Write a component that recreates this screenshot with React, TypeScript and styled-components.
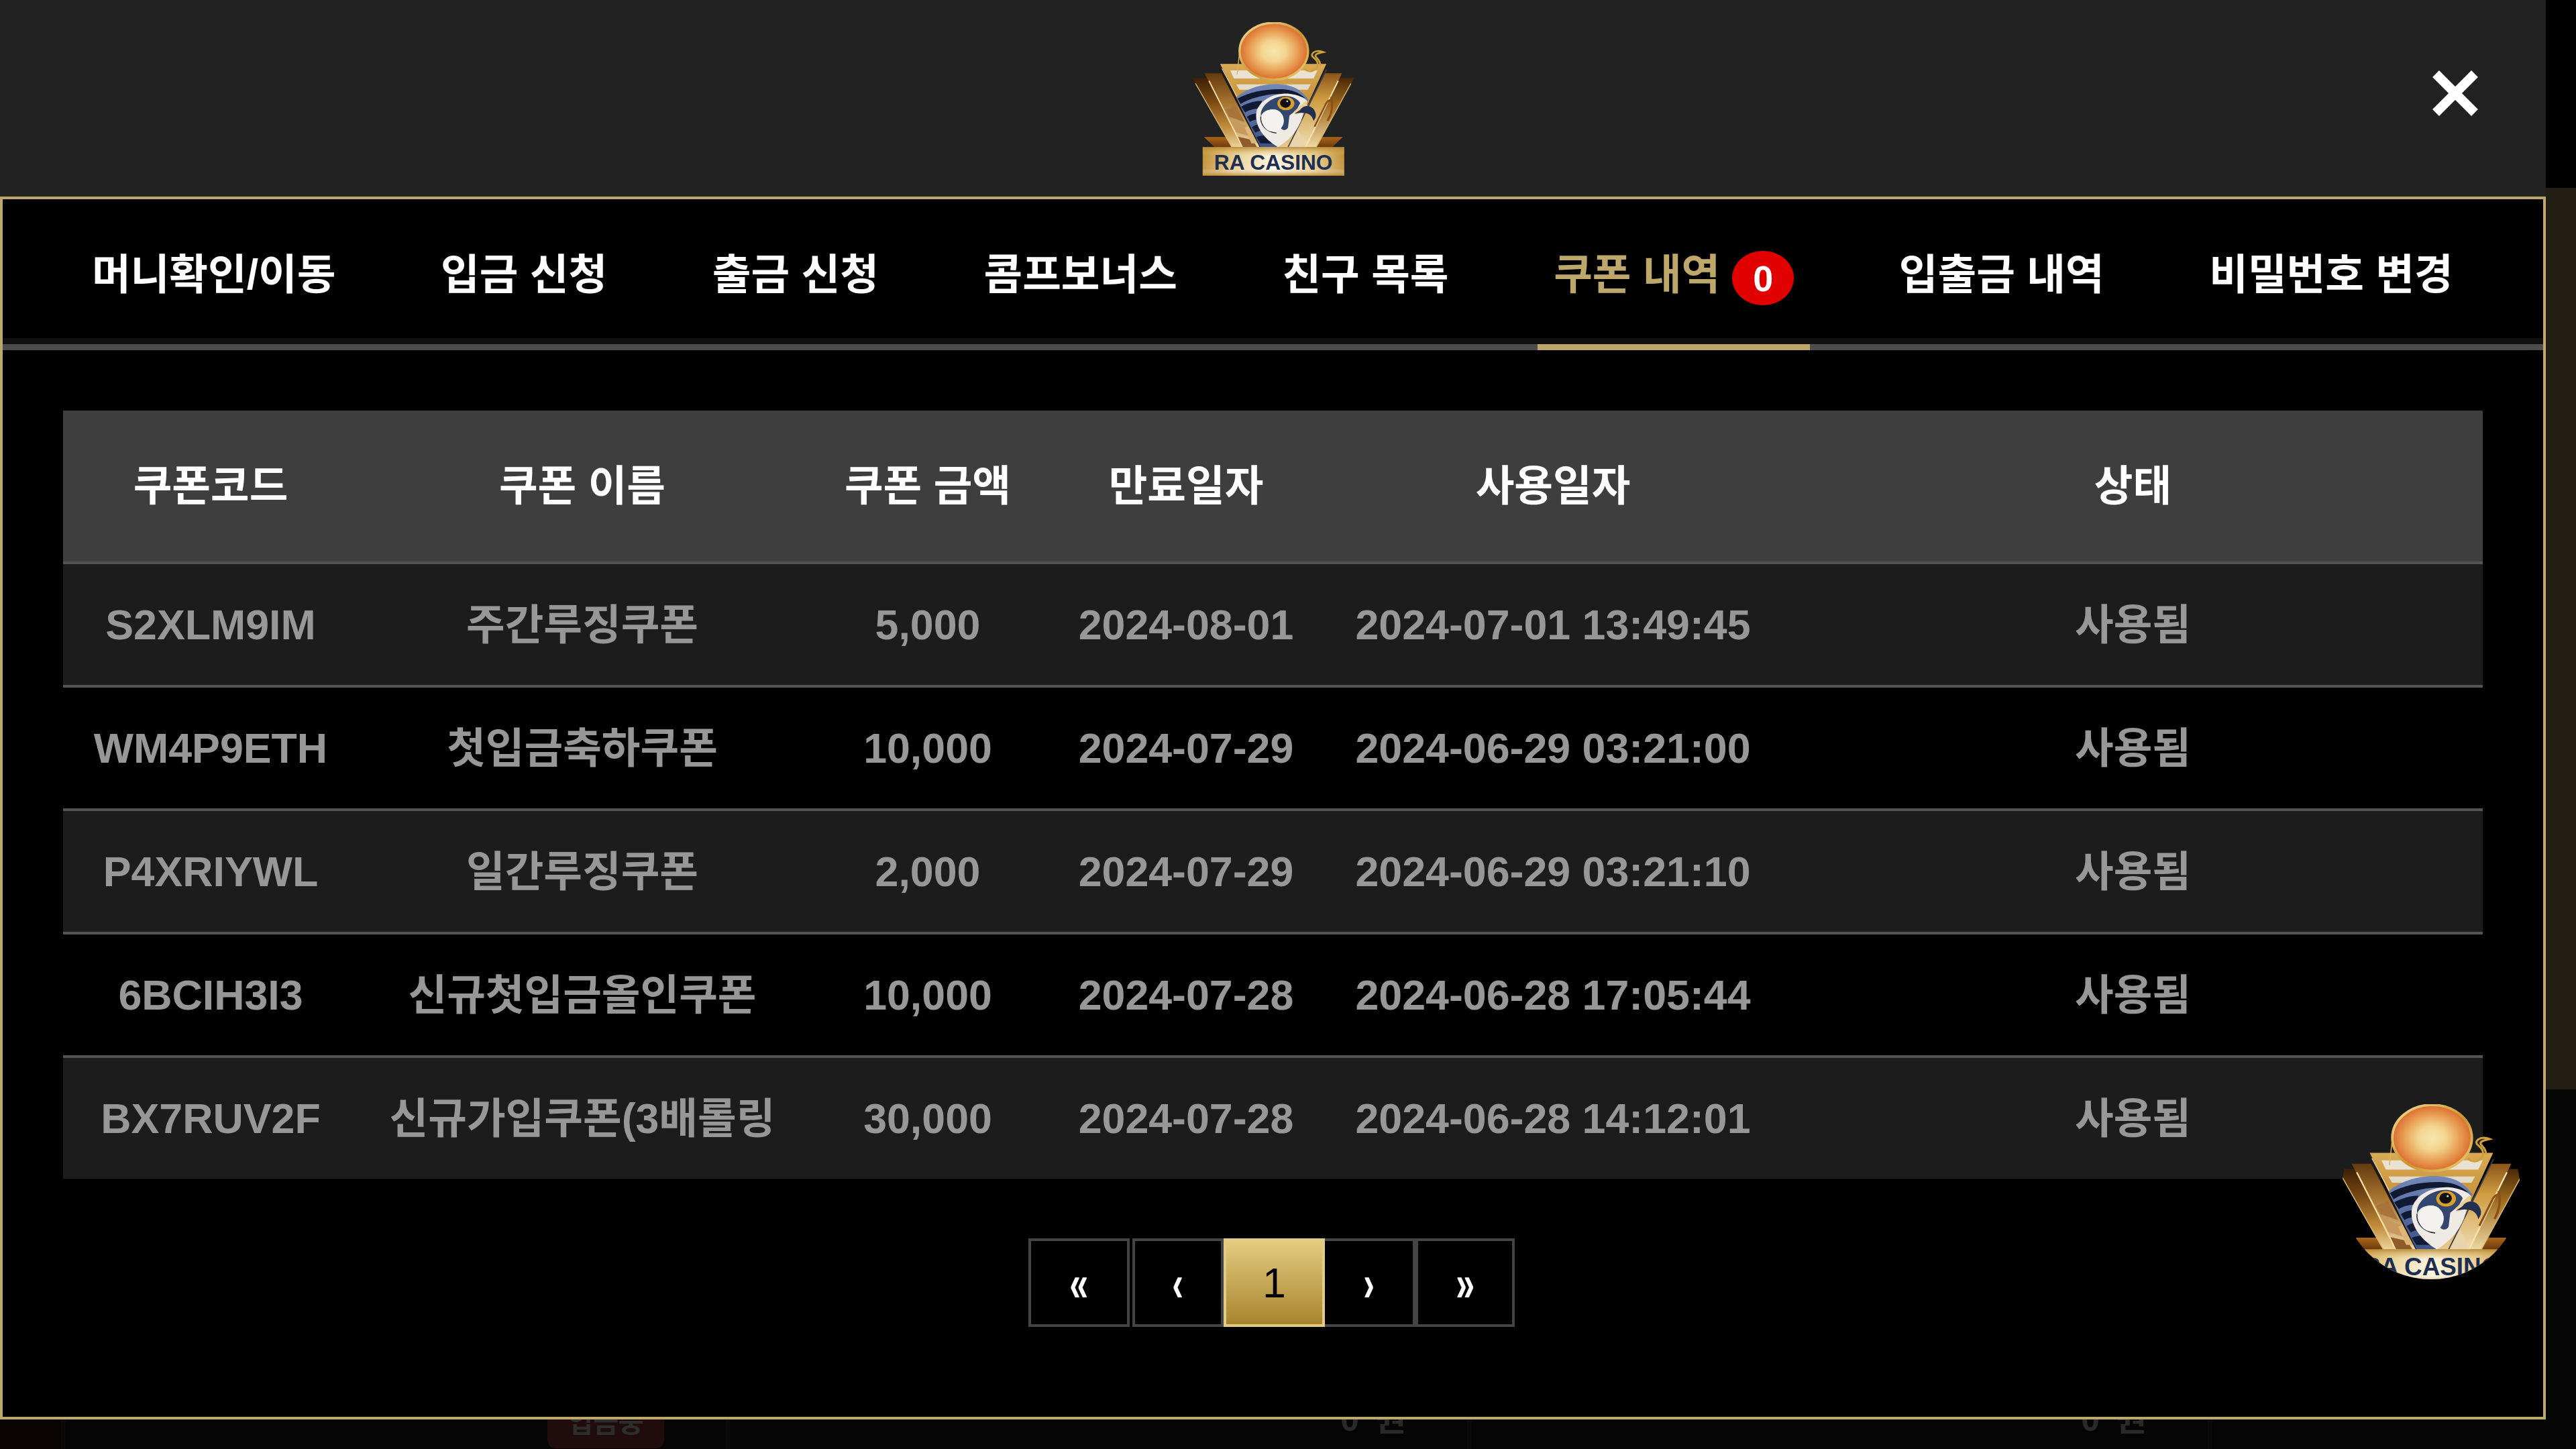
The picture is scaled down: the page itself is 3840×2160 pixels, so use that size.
import React from "react";
import styled, { createGlobalStyle } from "styled-components";

const GOLD = "#bda76b";
const FONT = `"Liberation Sans", "Noto Sans CJK KR", sans-serif`;

const Global = createGlobalStyle`
  html, body { margin: 0; padding: 0; width: 3840px; height: 2160px; overflow: hidden; background: #000; }
  #root { width: 3840px; height: 2160px; }
  * { box-sizing: border-box; }
`;

const Page = styled.div`
  display: grid;
  grid-template-columns: 3795px 45px;
  width: 3840px;
  height: 2160px;
  position: relative;
`;
const Main = styled.div`
  display: flex;
  flex-direction: column;
  min-width: 0;
`;
const Rail = styled.div`
  display: flex;
  flex-direction: column;
  background: #050505;
`;
const RailTop = styled.div`
  height: 280px;
  background: #000;
`;
const RailThumb = styled.div`
  height: 1344px;
  background: #231f14;
`;

const Header = styled.header`
  height: 293px;
  background: #222;
  display: grid;
  grid-template-columns: 1fr auto 1fr;
`;
const HeaderLogo = styled.div`
  grid-column: 2;
  width: 242px;
  height: 229px;
  margin-top: 33px;
`;
const CloseButton = styled.button`
  grid-column: 3;
  justify-self: end;
  align-self: start;
  width: 68px;
  height: 68px;
  margin: 105px 101px 0 0;
  padding: 0;
  border: 0;
  background: none;
  display: block;
`;

const Frame = styled.section`
  height: 1823px;
  border: 4px solid ${GOLD};
  background: #000;
  display: flex;
  flex-direction: column;
`;
const TabBar = styled.nav`
  height: 225px;
  display: flex;
  gap: 108.6px;
  padding-left: 109px;
  border-bottom: 9px solid #4d4d4d;
  box-shadow: inset 0 -9px 0 #111;
  flex: none;
`;
const Tab = styled.div<{ $active?: boolean }>`
  position: relative;
  display: flex;
  align-items: center;
  gap: 18px;
  height: 216px;
  padding: 8px 24px 0;
  font: 700 62.7px/1 ${FONT};
  white-space: nowrap;
  color: ${(p) => (p.$active ? GOLD : "#fff")};
  ${(p) =>
    p.$active &&
    `&::after { content: ""; position: absolute; left: 0; right: 0; bottom: -9px; height: 9px; background: ${GOLD}; }`}
`;
const Badge = styled.span`
  width: 92px;
  height: 81px;
  margin-top: 11px;
  border-radius: 50%;
  background: #e00000;
  color: #fff;
  display: flex;
  align-items: center;
  justify-content: center;
  font: 700 54px/1 ${FONT};
`;

const Content = styled.div`
  padding: 90px 0 0 90px;
`;
const Table = styled.table`
  width: 3607px;
  table-layout: fixed;
  border-collapse: separate;
  border-spacing: 0;
`;
const Th = styled.th`
  height: 229px;
  padding: 0;
  background: #3e3e3e;
  border-bottom: 4px solid #555;
  color: #fff;
  font: 700 62.7px/1 ${FONT};
  text-align: center;
`;
const Td = styled.td<{ $odd: boolean; $last: boolean }>`
  height: ${(p) => (p.$last ? 180 : 184)}px;
  padding: 0;
  background: ${(p) => (p.$odd ? "#1c1c1c" : "#000")};
  border-bottom: ${(p) => (p.$last ? "0" : "4px solid #555")};
  color: #979797;
  font: 700 62.7px/1 ${FONT};
  text-align: center;
  white-space: nowrap;
  overflow: hidden;
`;

const Pager = styled.div`
  display: flex;
  justify-content: center;
  margin-top: 89px;
  padding-right: 94px;
`;
const PageBtn = styled.div<{ $w: number; $gap?: number; $active?: boolean; $noLeft?: boolean }>`
  width: ${(p) => p.$w}px;
  height: 132px;
  margin-right: ${(p) => p.$gap ?? 0}px;
  border: 4px solid ${(p) => (p.$active ? "#e2cc84" : "#444")};
  ${(p) => (p.$noLeft ? "border-left-width: 0;" : "")}
  background: ${(p) => (p.$active ? "linear-gradient(180deg, #e2cc80 0%, #a8842f 100%)" : "#000")};
  color: ${(p) => (p.$active ? "#000" : "#fff")};
  display: flex;
  align-items: center;
  justify-content: center;
  font: 400 62.7px/1 ${FONT};
`;
const Chevron = styled.span`
  display: block;
  margin-top: 2px;
  font-size: 76px;
  font-weight: 700;
  line-height: 1;
  transform: scaleX(0.66);
`;

const Strip = styled.div`
  flex: 1;
  min-height: 0;
  overflow: hidden;
  background: #050505;
  display: grid;
  grid-template-columns: 50px 1038px 1106px 1104px 1fr;
  grid-template-rows: 44px;
`;
const StripCell = styled.div<{ $tint?: boolean; $noLine?: boolean }>`
  display: flex;
  justify-content: flex-end;
  align-items: flex-end;
  padding-right: 91px;
  background: ${(p) => (p.$tint ? "#090403" : "transparent")};
  border-right: ${(p) => (p.$noLine ? "0" : "7px solid #0a0a0a")};
  overflow: hidden;
  min-width: 0;
`;
const GhostStatus = styled.div`
  flex: none;
  width: 174px;
  height: 90px;
  margin-bottom: 1px;
  border-radius: 12px;
  background: #200c0c;
  color: #2d2d2d;
  font: 700 41px/1 ${FONT};
  display: flex;
  align-items: flex-end;
  justify-content: center;
  padding-bottom: 17px;
`;
const GhostAmount = styled.div`
  flex: none;
  color: #2a2a2a;
  font: 700 50px/1 ${FONT};
  word-spacing: 10px;
  margin-bottom: 19px;
  white-space: pre;
`;

const FloatLogo = styled.div`
  position: absolute;
  left: 3491px;
  top: 1641px;
  width: 266px;
  height: 266px;
  border-radius: 50%;
  overflow: hidden;
`;
const FloatLogoInner = styled.div`
  width: 281px;
  height: 266px;
  margin: 5px 0 0 -7px;
`;

const LogoSvg = styled.svg`
  display: block;
  width: 100%;
  height: 100%;
`;

const Logo = () => (
  <LogoSvg viewBox="235 98 725 687" aria-label="RA CASINO logo">
    <defs>
      <radialGradient id="sun" cx="50%" cy="50%" r="52%">
        <stop offset="0%" stopColor="#f6e6ad" />
        <stop offset="35%" stopColor="#f3d48f" />
        <stop offset="70%" stopColor="#e79a50" />
        <stop offset="100%" stopColor="#d8652c" />
      </radialGradient>
      <linearGradient id="ring" x1="0" y1="0" x2="1" y2="1">
        <stop offset="0%" stopColor="#f3dd96" />
        <stop offset="55%" stopColor="#c7962f" />
        <stop offset="100%" stopColor="#f0cf73" />
      </linearGradient>
      <linearGradient id="tri" x1="0" y1="0" x2="0" y2="1">
        <stop offset="0%" stopColor="#d9aa55" />
        <stop offset="45%" stopColor="#c8933a" />
        <stop offset="100%" stopColor="#e6c98a" />
      </linearGradient>
      <linearGradient id="wingOuter" x1="0" y1="0" x2="0" y2="1">
        <stop offset="0%" stopColor="#3e2005" />
        <stop offset="35%" stopColor="#7a4a14" />
        <stop offset="70%" stopColor="#c08a3a" />
        <stop offset="100%" stopColor="#ecd39a" />
      </linearGradient>
      <linearGradient id="wingInner" x1="0" y1="0" x2="0" y2="1">
        <stop offset="0%" stopColor="#643a0e" />
        <stop offset="40%" stopColor="#a87430" />
        <stop offset="100%" stopColor="#ecd6a4" />
      </linearGradient>
      <linearGradient id="wingRightOuter" x1="0" y1="0" x2="0" y2="1">
        <stop offset="0%" stopColor="#4a2807" />
        <stop offset="40%" stopColor="#a06c20" />
        <stop offset="100%" stopColor="#eed8a4" />
      </linearGradient>
      <linearGradient id="wingRight" x1="0" y1="0" x2="0" y2="1">
        <stop offset="0%" stopColor="#8a5518" />
        <stop offset="35%" stopColor="#cf9c40" />
        <stop offset="100%" stopColor="#f0ddb2" />
      </linearGradient>
      <linearGradient id="low" x1="0" y1="0" x2="0" y2="1">
        <stop offset="0%" stopColor="#a86518" />
        <stop offset="100%" stopColor="#6e3a0c" />
      </linearGradient>
      <linearGradient id="band" x1="0" y1="0" x2="1" y2="0">
        <stop offset="0%" stopColor="#bf8c30" />
        <stop offset="22%" stopColor="#e9cf92" />
        <stop offset="50%" stopColor="#fdf8e6" />
        <stop offset="78%" stopColor="#e9cf92" />
        <stop offset="100%" stopColor="#bf8c30" />
      </linearGradient>
      <linearGradient id="bandEdge" x1="0" y1="0" x2="0" y2="1">
        <stop offset="0%" stopColor="#b5832a" stopOpacity="0.85" />
        <stop offset="30%" stopColor="#e4c67e" stopOpacity="0.1" />
        <stop offset="75%" stopColor="#fff" stopOpacity="0.1" />
        <stop offset="100%" stopColor="#b5832a" stopOpacity="0.85" />
      </linearGradient>
      <linearGradient id="helm" x1="0" y1="0" x2="0" y2="1">
        <stop offset="0%" stopColor="#7488b8" />
        <stop offset="100%" stopColor="#3d5384" />
      </linearGradient>
    </defs>

    {/* lower trapezoids */}
    <polygon points="288,612 402,612 420,657 335,657" fill="url(#low)" />
    <polygon points="908,612 800,612 782,657 862,657" fill="url(#low)" />

    {/* left wing */}
    <polygon points="235,347 310,347 470,657 412,657" fill="url(#wingOuter)" />
    <polyline points="250,372 412,657" fill="none" stroke="#d8b56e" strokeWidth="4" />
    <polygon points="290,327 368,327 545,657 460,657" fill="url(#wingInner)" />
    <polyline points="310,360 460,657" fill="none" stroke="#f2dba0" strokeWidth="6" />
    {/* pyramid bands */}
    <polygon points="384,490 430,470 470,545 400,520" fill="#a9743a" />
    <polygon points="404,535 478,562 502,612 432,590" fill="#c89a5e" />
    <polygon points="440,610 505,625 525,657 462,657" fill="#8f5b2b" />
    <polygon points="470,570 490,560 528,640 500,640" fill="#dcb777" />

    {/* right wing */}
    <polygon points="960,347 890,347 735,657 790,657" fill="url(#wingRightOuter)" />
    <polyline points="945,372 790,657" fill="none" stroke="#d8b56e" strokeWidth="4" />
    <polygon points="905,327 828,327 655,657 742,657" fill="url(#wingRight)" />
    <polyline points="888,360 742,657" fill="none" stroke="#f5e3b4" strokeWidth="6" />

    {/* centre triangle */}
    <polygon points="360,285 835,285 664,657 540,657" fill="url(#tri)" />
    <polygon points="405,314 795,314 778,350 422,350" fill="#e9e2d4" />
    <polygon points="432,376 765,376 752,400 446,400" fill="#e3dbc9" />
    <line x1="358" y1="306" x2="540" y2="657" stroke="#1d1a18" strokeWidth="6" />
    <line x1="836" y1="310" x2="664" y2="657" stroke="#3b3f4a" strokeWidth="5" />
    <line x1="368" y1="306" x2="446" y2="452" stroke="#f3e4bd" strokeWidth="3" />

    {/* head-dress */}
    <path
      d="M432 434 C480 392 560 368 640 376 C690 382 732 406 756 448 L700 470 L590 470 L530 520 L560 600 L620 657 L540 657 Z"
      fill="url(#helm)"
    />
    <path d="M438 440 C490 410 560 396 640 398 C680 400 712 412 740 438 C690 420 620 412 560 426 C510 436 472 450 452 464 Z" fill="#111830" />
    <path d="M454 476 C482 460 520 450 548 450 L532 484 C505 486 482 494 472 502 Z" fill="#111a34" />
    <path d="M480 522 C492 512 510 507 526 507 L530 534 C516 534 506 536 494 544 Z" fill="#111a34" />
    <path d="M502 568 C514 558 532 554 546 554 L562 580 C546 580 532 584 518 592 Z" fill="#16203c" />
    <path d="M522 612 C540 604 565 602 585 606 L612 640 L540 640 Z" fill="#111a34" />

    {/* face */}
    <path
      d="M524 492 C544 442 604 414 668 418 C708 422 738 436 750 452 L722 540 C702 590 662 632 618 657 C556 620 508 560 524 492 Z"
      fill="#efeae3"
    />
    <path
      d="M542 505 C550 462 600 430 650 428 C682 428 708 442 718 460 L702 490 L670 516 L664 566 C662 584 632 586 630 566 L640 532 C638 500 618 488 590 488 C566 490 550 500 542 520 Z"
      fill="#33466e"
    />
    <path d="M542 520 C538 552 560 588 612 594" fill="none" stroke="#1d2845" strokeWidth="4" />
    <ellipse cx="597" cy="538" rx="48" ry="50" fill="#f4f2ee" />

    {/* eye */}
    <ellipse cx="654" cy="462" rx="38" ry="30" fill="#d99f2b" />
    <ellipse cx="652" cy="460" rx="24" ry="21" fill="#101015" />
    <circle cx="660" cy="452" r="4" fill="#dfe3ea" />

    {/* beak */}
    <path d="M688 500 L745 448 L752 482 L702 512 Z" fill="#e9cd92" />
    <path d="M716 492 C740 458 782 472 788 510 C790 522 784 532 778 540 C770 510 750 496 692 508 Z" fill="#222f4e" />

    {/* crook */}
    <polygon points="668,657 708,580 746,657" fill="#e8d3ad" />
    <path d="M782 566 L830 470 C840 446 858 440 862 452" fill="none" stroke="#8a5015" strokeWidth="8" />
    <path d="M856 432 C866 470 858 510 840 540" fill="none" stroke="#8a5015" strokeWidth="9" />

    {/* sun */}
    <path d="M446 240 L436 332" fill="none" stroke="#d9b45c" strokeWidth="4" />
    <ellipse cx="600" cy="228" rx="153" ry="127" fill="url(#sun)" stroke="url(#ring)" strokeWidth="10" />
    <path
      d="M738 306 C756 330 800 316 796 282 C792 258 764 256 772 240 C782 224 806 226 822 232 C806 236 788 238 786 248 C786 258 808 264 808 292"
      fill="none"
      stroke="#d0a138"
      strokeWidth="8"
    />

    {/* band */}
    <rect x="282" y="657" width="633" height="128" fill="url(#band)" />
    <rect x="282" y="657" width="633" height="128" fill="url(#bandEdge)" />
    <text
      x="598"
      y="757"
      textAnchor="middle"
      textLength="530"
      lengthAdjust="spacingAndGlyphs"
      fontFamily={FONT}
      fontWeight="700"
      fontSize="96"
      fill="#1e2e52"
    >
      RA CASINO
    </text>
  </LogoSvg>
);

const tabs = ["머니확인/이동", "입금 신청", "출금 신청", "콤프보너스", "친구 목록", "쿠폰 내역", "입출금 내역", "비밀번호 변경"];
const columns = [
  { label: "쿠폰코드", width: 440 },
  { label: "쿠폰 이름", width: 668 },
  { label: "쿠폰 금액", width: 362 },
  { label: "만료일자", width: 408 },
  { label: "사용일자", width: 686 },
  { label: "상태", width: 1043 },
];
const rows = [
  ["S2XLM9IM", "주간루징쿠폰", "5,000", "2024-08-01", "2024-07-01 13:49:45"],
  ["WM4P9ETH", "첫입금축하쿠폰", "10,000", "2024-07-29", "2024-06-29 03:21:00"],
  ["P4XRIYWL", "일간루징쿠폰", "2,000", "2024-07-29", "2024-06-29 03:21:10"],
  ["6BCIH3I3", "신규첫입금올인쿠폰", "10,000", "2024-07-28", "2024-06-28 17:05:44"],
  ["BX7RUV2F", "신규가입쿠폰(3배롤링", "30,000", "2024-07-28", "2024-06-28 14:12:01"],
];

export default function App() {
  return (
    <Page>
      <Global />
      <Main>
        <Header>
          <HeaderLogo>
            <Logo />
          </HeaderLogo>
          <CloseButton aria-label="닫기">
            <svg width="68" height="68" viewBox="0 0 68 68" style={{ display: "block" }}>
              <path d="M5 5 L63 63 M63 5 L5 63" stroke="#fff" strokeWidth="14" fill="none" />
            </svg>
          </CloseButton>
        </Header>
        <Frame>
          <TabBar>
            {tabs.map((t) => (
              <Tab key={t} $active={t === "쿠폰 내역"}>
                {t}
                {t === "쿠폰 내역" && <Badge>0</Badge>}
              </Tab>
            ))}
          </TabBar>
          <Content>
            <Table>
              <colgroup>
                {columns.map((c) => (
                  <col key={c.label} style={{ width: c.width }} />
                ))}
              </colgroup>
              <thead>
                <tr>
                  {columns.map((c) => (
                    <Th key={c.label}>{c.label}</Th>
                  ))}
                </tr>
              </thead>
              <tbody>
                {rows.map((r, i) => {
                  const odd = i % 2 === 0;
                  const last = i === rows.length - 1;
                  return (
                    <tr key={r[0]}>
                      {r.map((v, j) => (
                        <Td key={j} $odd={odd} $last={last}>{v}</Td>
                      ))}
                      <Td $odd={odd} $last={last}>사용됨</Td>
                    </tr>
                  );
                })}
              </tbody>
            </Table>
            <Pager>
              <PageBtn $w={151} $gap={4}><Chevron>«</Chevron></PageBtn>
              <PageBtn $w={136}><Chevron>‹</Chevron></PageBtn>
              <PageBtn $w={151} $active>1</PageBtn>
              <PageBtn $w={135} $noLeft><Chevron>›</Chevron></PageBtn>
              <PageBtn $w={148}><Chevron>»</Chevron></PageBtn>
            </Pager>
          </Content>
        </Frame>
        <Strip>
          <StripCell $tint />
          <StripCell>
            <GhostStatus>입금중</GhostStatus>
          </StripCell>
          <StripCell>
            <GhostAmount>0 원</GhostAmount>
          </StripCell>
          <StripCell>
            <GhostAmount>0 원</GhostAmount>
          </StripCell>
          <StripCell $noLine />
        </Strip>
      </Main>
      <Rail>
        <RailTop />
        <RailThumb />
      </Rail>
      <FloatLogo>
        <FloatLogoInner>
          <Logo />
        </FloatLogoInner>
      </FloatLogo>
    </Page>
  );
}
